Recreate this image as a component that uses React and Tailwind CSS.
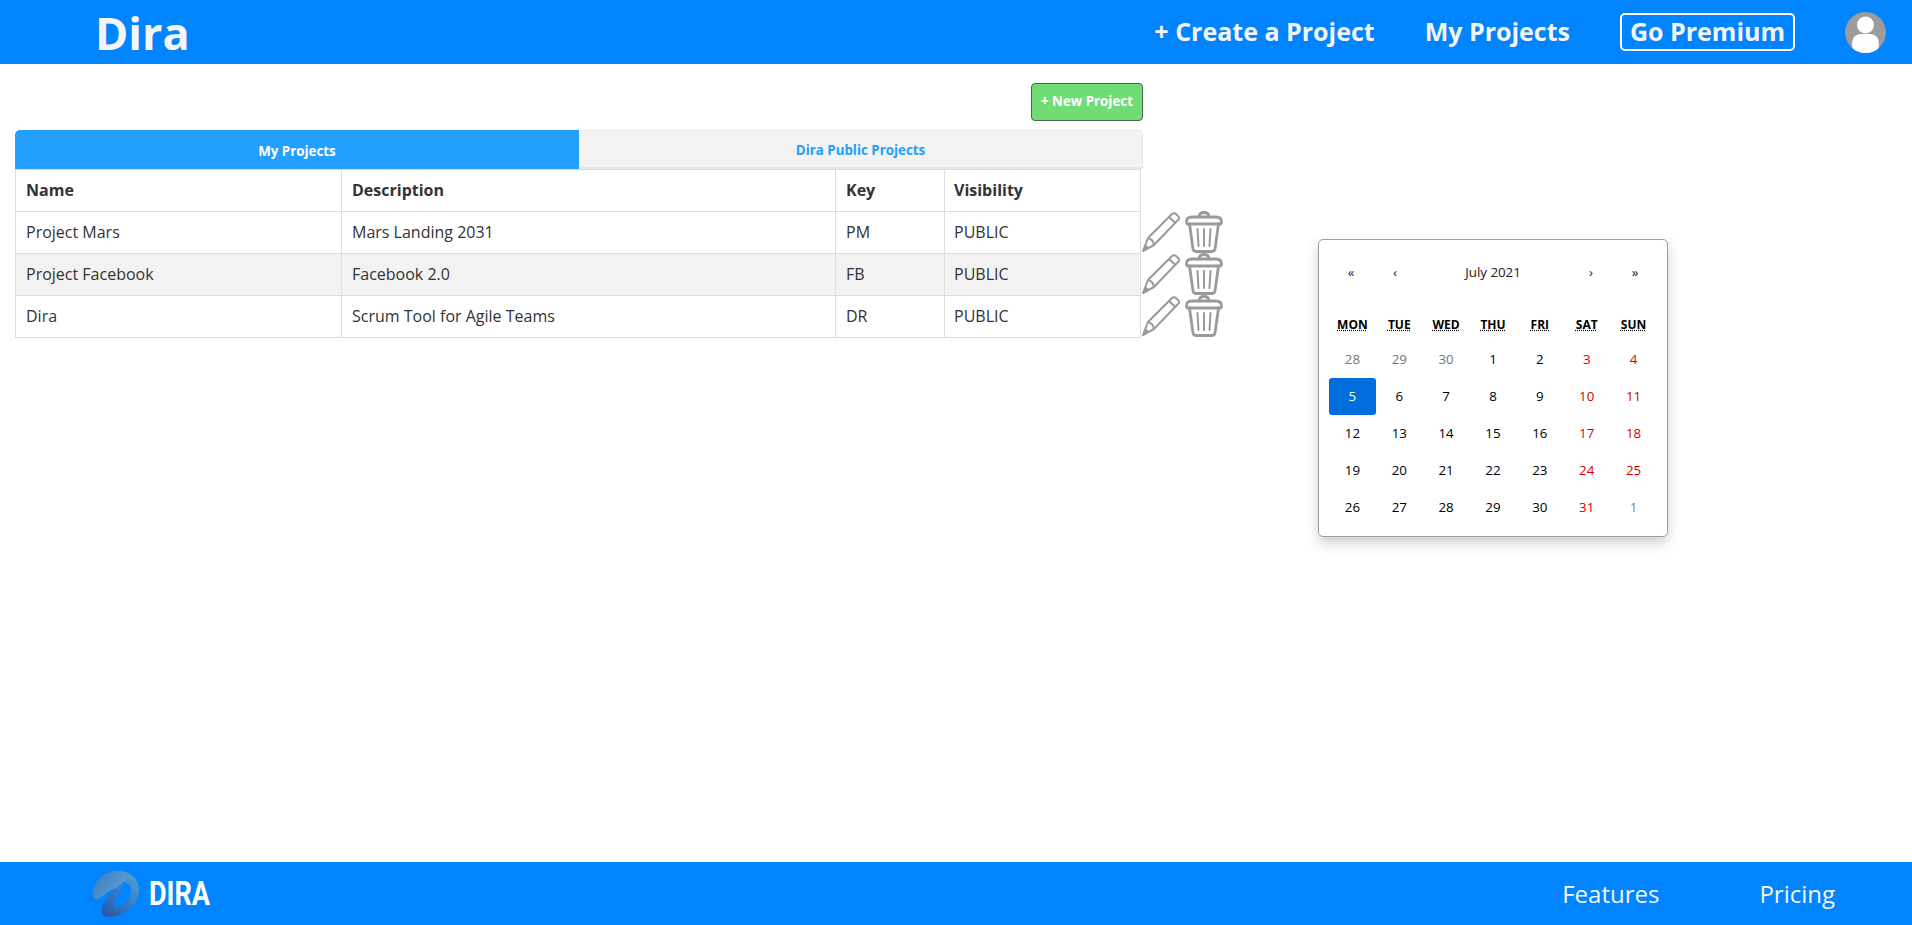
import React from 'react';

const projects = [
  { name: 'Project Mars', description: 'Mars Landing 2031', key: 'PM', visibility: 'PUBLIC' },
  { name: 'Project Facebook', description: 'Facebook 2.0', key: 'FB', visibility: 'PUBLIC' },
  { name: 'Dira', description: 'Scrum Tool for Agile Teams', key: 'DR', visibility: 'PUBLIC' },
];

const weekDays = ['MON', 'TUE', 'WED', 'THU', 'FRI', 'SAT', 'SUN'];

const days = [
  28, 29, 30, 1, 2, 3, 4,
  5, 6, 7, 8, 9, 10, 11,
  12, 13, 14, 15, 16, 17, 18,
  19, 20, 21, 22, 23, 24, 25,
  26, 27, 28, 29, 30, 31, 1,
];

function dayColor(index) {
  if (index === 7) return 'bg-[#006edc] text-white rounded-[3px]';
  if (index < 3) return 'text-[#757575]';
  if (index === 34) return 'text-[#5f8fa3]';
  if (index % 7 >= 5) return 'text-[#d10000]';
  return 'text-black';
}

function PencilIcon() {
  return (
    <svg width="38" height="42" viewBox="0 0 38 42" fill="none" stroke="#9a9a9a" strokeWidth="2" strokeLinejoin="round" className="block shrink-0">
      <path d="M1 40 L6 27 L30 3 Q32 1.500 34 3 L36.500 5.500 Q38 7.500 36 9 L12 34 Z" />
      <path d="M6 27 Q11 28 12 34" />
      <path d="M1 40 L3.500 33.500 Q6.500 35 7 37.500 Z" fill="#9a9a9a" stroke="none" />
      <path d="M27 6 L33.500 12" />
    </svg>
  );
}

function TrashIcon() {
  return (
    <svg width="38" height="42" viewBox="0 0 38 42" fill="none" stroke="#9a9a9a" strokeWidth="2.800" strokeLinejoin="round" strokeLinecap="round" className="block shrink-0">
      <path d="M14 6 Q14 1.500 19 1.500 Q24 1.500 24 6" />
      <path d="M3 13 Q1.500 13 1.500 11 Q1.500 6 7 6 L31 6 Q36.500 6 36.500 11 Q36.500 13 35 13 Z" />
      <path d="M4.500 13 L8 38 Q8.500 40.500 11.500 40.500 L26.500 40.500 Q29.500 40.500 30 38 L33.500 13" />
      <path d="M12.500 18 L13.500 35" strokeWidth="2" />
      <path d="M19 18 L19 35" strokeWidth="2" />
      <path d="M25.500 18 L24.500 35" strokeWidth="2" />
    </svg>
  );
}

function AvatarIcon() {
  return (
    <svg width="41" height="41" viewBox="0 0 41 41" className="block">
      <defs>
        <clipPath id="avatar-clip">
          <circle cx="20.500" cy="20.500" r="20.500" />
        </clipPath>
      </defs>
      <circle cx="20.500" cy="20.500" r="20.500" fill="#9c9c9c" />
      <g clipPath="url(#avatar-clip)" fill="#ffffff">
        <circle cx="20.500" cy="13" r="8.500" />
        <path d="M7 33 Q7 22 16 22 L25 22 Q34 22 34 33 Q34 41 25 41 L16 41 Q7 41 7 33 Z" />
      </g>
    </svg>
  );
}

function DiraLogo() {
  return (
    <svg width="46" height="46" viewBox="0 0 46 46" className="block shrink-0">
      <defs>
        <linearGradient id="swirl-body" x1="1" y1="0.100" x2="0.100" y2="1">
          <stop offset="0" stopColor="#4fa3d6" />
          <stop offset="0.500" stopColor="#3478c4" />
          <stop offset="1" stopColor="#2b4f9e" />
        </linearGradient>
        <linearGradient id="swirl-lobe" x1="0" y1="0" x2="1" y2="0.600">
          <stop offset="0" stopColor="#3c78be" />
          <stop offset="1" stopColor="#5aa6d8" />
        </linearGradient>
      </defs>
      <path
        fillRule="evenodd"
        fill="url(#swirl-body)"
        d="M0 22 C0 8 14 0 26 0 C38 0 46 8 46 20 C46 33 32 46 16 46 C10 46 8 42 9 37 C11 30 17 23 23 17 C17 19 11 24 7 27 C3 30 0 28 0 22 Z M31 11 C27 19 23 28 20 37 C30 36 38 28 38 20 C38 15 35 12 31 11 Z"
      />
      <path fill="url(#swirl-lobe)" d="M0 22 C0 8 14 0 26 0 C31 0 35 2 39 5 C33 8 28 12 23 17 C17 19 11 24 7 27 C3 30 0 28 0 22 Z" />
    </svg>
  );
}

function Calendar() {
  return (
    <div className="mt-[160px] ml-[175px] h-[298px] w-[350px] shrink-0 rounded-[5px] border border-[#a0a096] bg-white p-[10px] shadow-[0_6px_12px_rgba(60,70,110,0.25)] font-['Open_Sans',sans-serif] text-[13.33px]">
      <div className="mb-3 flex h-[46px] items-center text-center text-[#1a1a1a]">
        <span className="w-11">«</span>
        <span className="w-11">‹</span>
        <span className="flex-1 text-[13.33px]">July 2021</span>
        <span className="w-11">›</span>
        <span className="w-11">»</span>
      </div>
      <div className="grid h-[33px] grid-cols-7 items-center text-center text-xs font-bold text-black">
        {weekDays.map((day) => (
          <span key={day}>
            <span className="underline decoration-dotted decoration-black">{day}</span>
          </span>
        ))}
      </div>
      <div className="grid grid-cols-7">
        {days.map((day, index) => (
          <div key={index} className={`flex h-[37px] items-center justify-center ${dayColor(index)}`}>
            {day}
          </div>
        ))}
      </div>
    </div>
  );
}

function ProjectsTable() {
  return (
    <div className="w-[1128px] shrink-0">
      <div className="flex justify-end pt-1">
        <button className="h-[38px] w-[112px] rounded-[4px] border border-[#4c6a50] bg-[#6fdc74] text-[13.33px] font-bold text-white">
          + New Project
        </button>
      </div>
      <div className="mt-[9px] flex h-[39px] text-[13.33px] font-bold">
        <div className="flex w-[564px] items-center justify-center rounded-tl-[5px] bg-[#229fff] pt-1 text-white">My Projects</div>
        <div className="flex flex-1 items-center justify-center rounded-tr-[5px] border border-b-2 border-l-0 border-[#e6e6e6] bg-[#f3f3f3] pt-1 text-[#229fff]">
          Dira Public Projects
        </div>
      </div>
      <table className="w-[1125px] table-fixed border-collapse text-base text-[#333333]">
        <colgroup>
          <col className="w-[326px]" />
          <col className="w-[494px]" />
          <col className="w-[109px]" />
          <col className="w-[196px]" />
        </colgroup>
        <thead>
          <tr className="h-[42px] font-bold">
            <th className="border border-[#dddddd] px-[10px] pb-[2px] text-left">Name</th>
            <th className="border border-[#dddddd] px-[10px] pb-[2px] text-left">Description</th>
            <th className="border border-[#dddddd] px-[10px] pb-[2px] text-left">Key</th>
            <th className="border border-[#dddddd] pl-[9px] pb-[2px] text-left">Visibility</th>
          </tr>
        </thead>
        <tbody>
          {projects.map((project) => (
            <tr key={project.key} className="h-[42px] even:bg-[#f2f2f2]">
              <td className="border border-[#dddddd] px-[10px] pb-[2px]">{project.name}</td>
              <td className="border border-[#dddddd] px-[10px] pb-[2px]">{project.description}</td>
              <td className="border border-[#dddddd] px-[10px] pb-[2px]">{project.key}</td>
              <td className="relative border border-[#dddddd] pl-[9px] pb-[2px]">
                {project.visibility}
                <div className="absolute left-full top-[-1px] flex gap-[5px] pl-[2px]">
                  <PencilIcon />
                  <TrashIcon />
                </div>
              </td>
            </tr>
          ))}
        </tbody>
      </table>
    </div>
  );
}

export default function App() {
  return (
    <div className="flex h-[925px] flex-col overflow-hidden bg-white font-['Open_Sans',sans-serif]">
      <header className="flex h-16 shrink-0 items-center bg-[#0084ff] text-[25px] font-bold text-[#f5f5f5]">
        <div className="ml-[95px] text-[45px] leading-none">Dira</div>
        <nav className="ml-auto flex items-center">
          <a className="mr-[50px]">+ Create a Project</a>
          <a className="mr-[50px]">My Projects</a>
          <a className="mr-[50px] flex h-[38px] w-[175px] items-center justify-center rounded-[5px] border-2 border-white">Go Premium</a>
          <div className="mr-[26px]">
            <AvatarIcon />
          </div>
        </nav>
      </header>

      <main className="flex flex-1 items-start pl-[15px] pt-[15px]">
        <ProjectsTable />
        <Calendar />
      </main>

      <footer className="flex h-[63px] shrink-0 items-center bg-[#0084ff] text-2xl text-[#f5f5f5]">
        <div className="ml-[93px] flex items-center gap-[10px]">
          <DiraLogo />
          <span className="origin-left scale-x-[0.82] font-['Roboto',sans-serif] text-[33px] font-bold leading-none text-white">DIRA</span>
        </div>
        <div className="ml-auto flex items-center gap-[100px] pr-[77px]">
          <a>Features</a>
          <a>Pricing</a>
        </div>
      </footer>
    </div>
  );
}
